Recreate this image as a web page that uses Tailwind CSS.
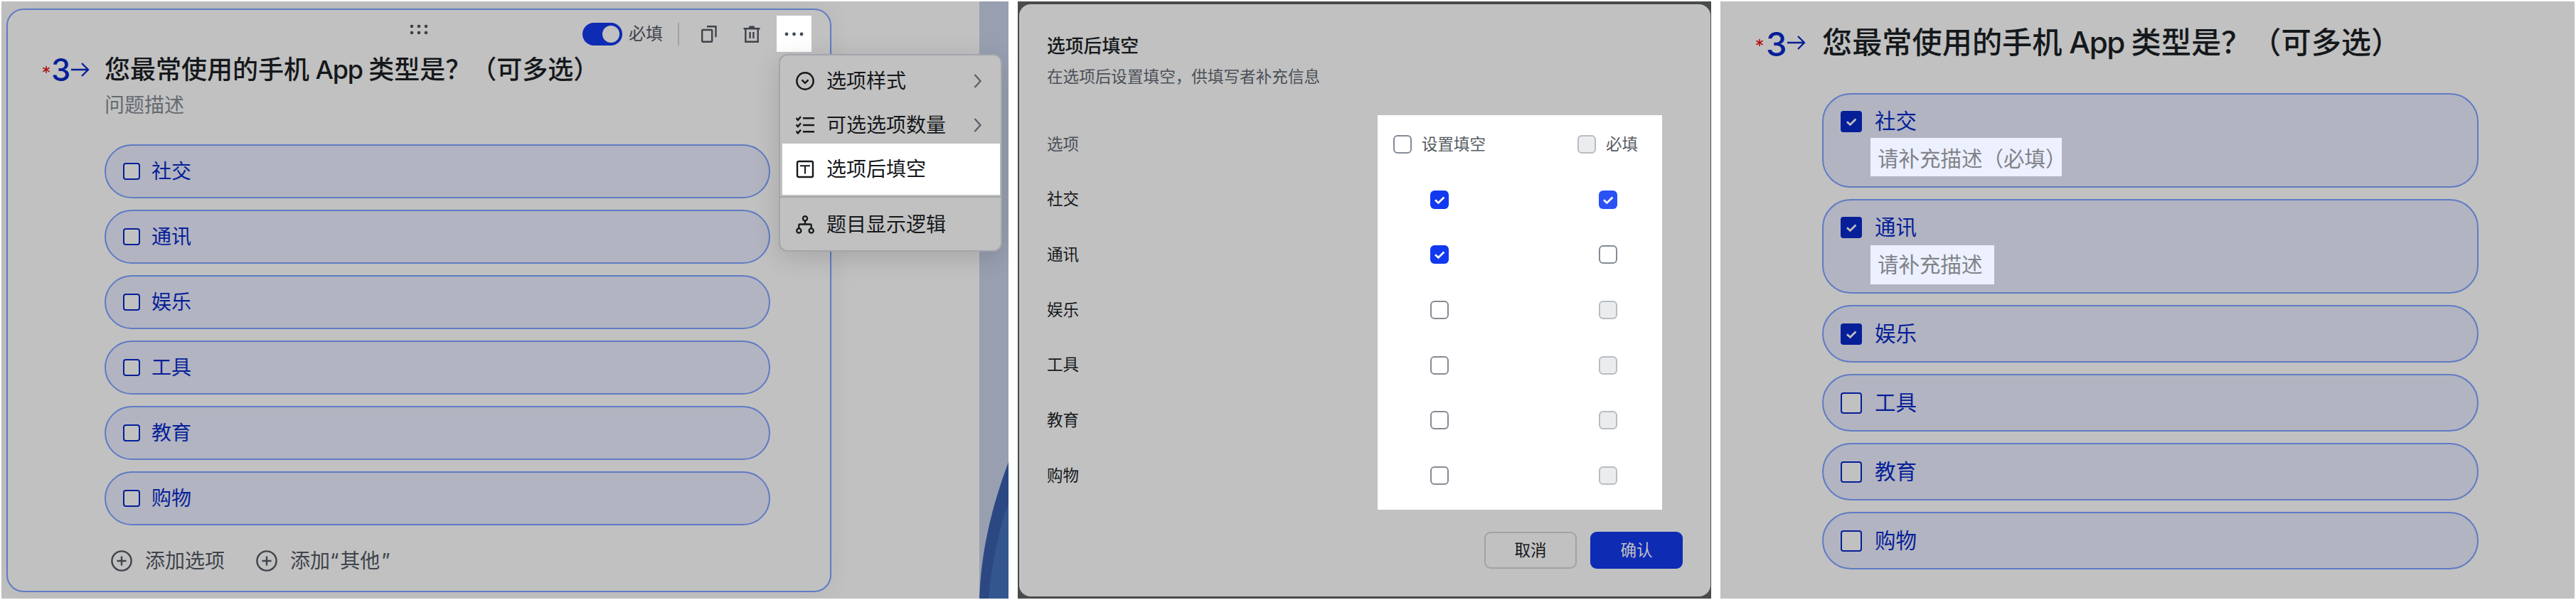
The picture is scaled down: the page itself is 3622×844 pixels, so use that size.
<!DOCTYPE html>
<html lang="zh-CN">
<head>
    <meta charset="UTF-8">
    <title>选项后填空</title>
    <script src="https://cdn.jsdelivr.net/npm/@tailwindcss/browser@4"></script>
</head>
<body class="w-[3622px] h-[844px] overflow-hidden bg-white flex items-start pl-[2px] pt-[2px] leading-none whitespace-nowrap font-['Inter','Noto_Sans_CJK_SC',sans-serif]">

    <svg class="hidden">
        <symbol id="check" viewBox="0 0 26 26"><path d="M7 13.2l4.4 4.2L19.4 9.4" fill="none" stroke="currentColor" stroke-width="2.8"/></symbol>
        <symbol id="arrow" viewBox="0 0 26 20"><path d="M0 10h24M15 1l9 9-9 9" fill="none" stroke="currentColor" stroke-width="2.3"/></symbol>
        <symbol id="star" viewBox="0 0 10 10"><path d="M5 0v10M.4 2.3l9.2 5.4M9.6 2.3l-9.2 5.4" fill="none" stroke="currentColor" stroke-width="1.6"/></symbol>
        <symbol id="plus" viewBox="0 0 30 30"><path d="M15 8.5v13M8.5 15h13" fill="none" stroke="currentColor" stroke-width="2.4"/><circle cx="15" cy="15" r="13.6" fill="none" stroke="currentColor" stroke-width="2.4"/></symbol>
        <symbol id="chevron" viewBox="0 0 12 20"><path d="M1.5 1l8 9-8 9" fill="none" stroke="currentColor" stroke-width="2.4"/></symbol>
    </svg>

    <!-- question editor -->
    <section class="relative shrink-0 w-[1416px] h-[840px] overflow-hidden bg-[#c1c1c1] flex">
        <div class="ml-[7px] mt-[10px] w-[1160px] h-[821px] rounded-[24px] border-2 border-[#5f7bc4] pt-2 shadow-[0_0_36px_rgba(0,0,0,0.06)]">
            <div class="grid grid-cols-[1fr_auto_1fr] h-[51px]">
                <div></div>
                <svg class="mt-3 w-[26px] h-[15px]" viewBox="0 0 26 15" fill="#3a3f45">
                    <circle cx="3" cy="3" r="2.3"/><circle cx="13" cy="3" r="2.3"/><circle cx="23" cy="3" r="2.3"/>
                    <circle cx="3" cy="12" r="2.3"/><circle cx="13" cy="12" r="2.3"/><circle cx="23" cy="12" r="2.3"/>
                </svg>
                <div class="flex items-center justify-end pr-[26px] text-[#3f444b]">
                    <div class="w-14 h-8 rounded-full bg-[#0e2bb4] p-1 flex justify-end"><span class="size-6 rounded-full bg-[#c1c1c1]"></span></div>
                    <span class="ml-[9px] w-12 text-[24px]">必填</span>
                    <span class="ml-[21px] w-[2px] h-8 bg-[#a0a2a4]"></span>
                    <svg class="ml-[30px] w-6 h-6" viewBox="0 0 24 24" fill="none" stroke="currentColor" stroke-width="2.4"><rect x="2.2" y="6" width="14" height="16.8" rx="1"/><path d="M9 1.3h12.5v15"/></svg>
                    <svg class="ml-9 w-6 h-6" viewBox="0 0 24 24" fill="none" stroke="currentColor" stroke-width="2.4"><path d="M.5 4.2h23M3.3 4.5v18.3h17.4V4.5M9.6 9v9M14.4 9v9"/><path d="M7.5 4.2l1-3.6h7l1 3.6z" fill="currentColor" stroke="none"/></svg>
                    <div class="ml-[23px] w-[49px] h-[51px] bg-white flex items-center justify-center">
                        <svg class="w-[27px] h-[6px]" viewBox="0 0 27 6" fill="#414b57"><circle cx="3" cy="3" r="2.4"/><circle cx="13.5" cy="3" r="2.4"/><circle cx="24" cy="3" r="2.4"/></svg>
                    </div>
                </div>
            </div>
            <div class="flex items-center h-[50px] pl-[49px] text-[#061f98]">
                <svg class="w-[10px] h-[10px] text-[#b01417]"><use href="#star"/></svg>
                <span class="ml-[2px] w-[28px] pt-[2px] text-[43.500px] font-medium">3</span>
                <svg class="w-[26px] h-[20px]"><use href="#arrow"/></svg>
                <h1 class="ml-[21px] text-[36px] font-medium text-[#15181b]">您最常使用的手机<span class="tracking-[-1.2px]"> App </span>类型是？（可多选）</h1>
            </div>
            <p class="ml-[136px] mt-[11px] h-7 text-[28px] text-[#656a70]">问题描述</p>
            <div class="ml-[136px] mt-[41px] w-[936px] flex flex-col gap-4 text-[28px] text-[#061f98]">
                <div class="flex items-center gap-4 h-[76px] pl-6 rounded-full border-2 border-[#5f7bc4] bg-[#b2b4c1]"><span class="size-6 rounded-[4px] border-2 border-[#061f98] bg-[#c1c1c1]"></span><span>社交</span></div>
                <div class="flex items-center gap-4 h-[76px] pl-6 rounded-full border-2 border-[#5f7bc4] bg-[#b2b4c1]"><span class="size-6 rounded-[4px] border-2 border-[#061f98] bg-[#c1c1c1]"></span><span>通讯</span></div>
                <div class="flex items-center gap-4 h-[76px] pl-6 rounded-full border-2 border-[#5f7bc4] bg-[#b2b4c1]"><span class="size-6 rounded-[4px] border-2 border-[#061f98] bg-[#c1c1c1]"></span><span>娱乐</span></div>
                <div class="flex items-center gap-4 h-[76px] pl-6 rounded-full border-2 border-[#5f7bc4] bg-[#b2b4c1]"><span class="size-6 rounded-[4px] border-2 border-[#061f98] bg-[#c1c1c1]"></span><span>工具</span></div>
                <div class="flex items-center gap-4 h-[76px] pl-6 rounded-full border-2 border-[#5f7bc4] bg-[#b2b4c1]"><span class="size-6 rounded-[4px] border-2 border-[#061f98] bg-[#c1c1c1]"></span><span>教育</span></div>
                <div class="flex items-center gap-4 h-[76px] pl-6 rounded-full border-2 border-[#5f7bc4] bg-[#b2b4c1]"><span class="size-6 rounded-[4px] border-2 border-[#061f98] bg-[#c1c1c1]"></span><span>购物</span></div>
            </div>
            <div class="ml-[145px] mt-[35px] h-[30px] flex items-center text-[28px] text-[#3f444b]">
                <svg class="size-[30px]"><use href="#plus"/></svg>
                <span class="ml-[18px] w-[112px]">添加选项</span>
                <svg class="ml-11 size-[30px]"><use href="#plus"/></svg>
                <span class="ml-[18px]">添加“<span class="mx-[2px]">其他</span>”</span>
            </div>
        </div>

        <svg class="ml-auto w-[41px] h-[840px] bg-[#989fb1]" viewBox="0 0 41 840">
            <path d="M41 648C20 704 3 765 0 840h41z" fill="#2b4882"/>
            <path d="M41 705C28 742 17 792 13 840h28z" fill="#34568f"/>
        </svg>

        <!-- more menu -->
        <div class="absolute left-[1093px] top-[74px] w-[314px] h-[278px] rounded-xl border-2 border-[#a3a5aa] bg-[#c1c1c1] shadow-[0_8px_36px_rgba(0,0,0,0.14)] pt-[5px] text-[28px] text-[#15181b]">
            <div class="flex items-center h-[62px] pl-[22px] pr-[26px]">
                <svg class="size-[26px]" viewBox="0 0 26 26" fill="none" stroke="currentColor" stroke-width="2.4"><circle cx="13" cy="13" r="11.7"/><path d="M8.5 11.3l4.5 4.5 4.5-4.5"/></svg>
                <span class="ml-[17px]">选项样式</span>
                <svg class="ml-auto w-3 h-5 text-[#5d6269]"><use href="#chevron"/></svg>
            </div>
            <div class="flex items-center h-[62px] pl-[22px] pr-[26px]">
                <svg class="size-[26px]" viewBox="0 0 26 26" fill="none" stroke="currentColor" stroke-width="2.4"><path d="M10 3.2h16M10 13h16M10 22.3h16M.5 3l2.4 2.8L7 1M.5 12.3l2.4 2.8L7 10.3M.5 21.6l2.4 2.8L7 19.6"/></svg>
                <span class="ml-[17px]">可选选项数量</span>
                <svg class="ml-auto w-3 h-5 text-[#5d6269]"><use href="#chevron"/></svg>
            </div>
            <div class="flex items-center ml-[3px] -mt-[5px] w-[306px] h-[72px] pl-[19px] bg-white">
                <svg class="size-[26px]" viewBox="0 0 26 26" fill="none" stroke="currentColor" stroke-width="2.4"><rect x="2" y="2" width="22" height="22" rx="2"/><path d="M6 8.3h14M13 8.3V19.5" stroke-width="2"/></svg>
                <span class="ml-[17px]">选项后填空</span>
            </div>
            <div class="mt-[2px] h-[2px] bg-[#a3a5a7]"></div>
            <div class="flex items-center h-[76px] pl-[22px]">
                <svg class="size-[26px]" viewBox="0 0 26 26" fill="none" stroke="currentColor" stroke-width="2.3"><circle cx="13" cy="4.2" r="3.1"/><circle cx="4.3" cy="21.5" r="3.1"/><circle cx="21.7" cy="21.5" r="3.1"/><path d="M13 7.5v5M4.3 18v-4.2q0-1.3 1.3-1.3h14.8q1.3 0 1.3 1.3V18"/></svg>
                <span class="ml-[17px]">题目显示逻辑</span>
            </div>
        </div>
    </section>

    <!-- fill-in dialog -->
    <section class="shrink-0 ml-[13px] w-[975px] h-[840px] bg-[#484a4b] pl-[2px] pt-1">
        <div class="w-[972px] h-[833px] rounded-2xl bg-[#c1c1c1] pl-[39px] text-[22.500px]">
            <h2 class="pt-[46px] h-[73px] text-[25.800px] font-medium text-[#15181b]">选项后填空</h2>
            <p class="pt-[18px] h-[83px] text-[22.600px] text-[#4b5057]">在选项后设置填空，供填写者补充信息</p>
            <div class="flex h-[555px]">
                <div class="w-[465px] pt-[2px] text-[#15181b]">
                    <div class="flex items-center h-[77.700px] text-[#4b5057]">选项</div>
                    <div class="flex items-center h-[77.700px]">社交</div>
                    <div class="flex items-center h-[77.700px]">通讯</div>
                    <div class="flex items-center h-[77.700px]">娱乐</div>
                    <div class="flex items-center h-[77.700px]">工具</div>
                    <div class="flex items-center h-[77.700px]">教育</div>
                    <div class="flex items-center h-[77.700px]">购物</div>
                </div>
                <div class="w-[400px] pt-[2px] bg-white text-[#565b62]">
                    <div class="flex items-center h-[77.700px] pl-[22px]">
                        <span class="size-[26px] rounded-[6px] border-2 border-[#858b95]"></span><span class="ml-[14px] w-[90px]">设置填空</span>
                        <span class="ml-[129px] size-[26px] rounded-[6px] border-2 border-[#b8bdc2] bg-[#ebecee]"></span><span class="ml-[14px]">必填</span>
                    </div>
                    <div class="flex items-center gap-[211px] h-[77.700px] pl-[74px]">
                        <span class="size-[26px] rounded-[6px] bg-[#1139ef] text-white"><svg class="size-[26px]"><use href="#check"/></svg></span>
                        <span class="size-[26px] rounded-[6px] bg-[#2a52f5] text-white"><svg class="size-[26px]"><use href="#check"/></svg></span>
                    </div>
                    <div class="flex items-center gap-[211px] h-[77.700px] pl-[74px]">
                        <span class="size-[26px] rounded-[6px] bg-[#1139ef] text-white"><svg class="size-[26px]"><use href="#check"/></svg></span>
                        <span class="size-[26px] rounded-[6px] border-2 border-[#858b95]"></span>
                    </div>
                    <div class="flex items-center gap-[211px] h-[77.700px] pl-[74px]">
                        <span class="size-[26px] rounded-[6px] border-2 border-[#858b95]"></span>
                        <span class="size-[26px] rounded-[6px] border-2 border-[#b8bdc2] bg-[#ebecee]"></span>
                    </div>
                    <div class="flex items-center gap-[211px] h-[77.700px] pl-[74px]">
                        <span class="size-[26px] rounded-[6px] border-2 border-[#858b95]"></span>
                        <span class="size-[26px] rounded-[6px] border-2 border-[#b8bdc2] bg-[#ebecee]"></span>
                    </div>
                    <div class="flex items-center gap-[211px] h-[77.700px] pl-[74px]">
                        <span class="size-[26px] rounded-[6px] border-2 border-[#858b95]"></span>
                        <span class="size-[26px] rounded-[6px] border-2 border-[#b8bdc2] bg-[#ebecee]"></span>
                    </div>
                    <div class="flex items-center gap-[211px] h-[77.700px] pl-[74px]">
                        <span class="size-[26px] rounded-[6px] border-2 border-[#858b95]"></span>
                        <span class="size-[26px] rounded-[6px] border-2 border-[#b8bdc2] bg-[#ebecee]"></span>
                    </div>
                </div>
            </div>
            <div class="flex justify-end gap-[19px] mt-[31px] pr-[39px]">
                <button class="w-[130px] h-[52px] rounded-[9px] border-2 border-[#a0a2a6] text-[#15181b]">取消</button>
                <button class="w-[130px] h-[52px] rounded-[9px] bg-[#0e2bb4] text-[#c1c1c1]">确认</button>
            </div>
        </div>
    </section>

    <!-- respondent view -->
    <section class="shrink-0 ml-[13px] w-[1201px] h-[840px] bg-[#c1c1c1] pt-[33px]">
        <div class="flex items-center h-[50px] pl-[50px] text-[#061f98]">
            <svg class="w-[10px] h-[10px] text-[#b01417]"><use href="#star"/></svg>
            <span class="ml-[4px] w-[30px] pt-[2px] text-[47px] font-medium">3</span>
            <svg class="w-[26px] h-[20px]"><use href="#arrow"/></svg>
            <h1 class="ml-[23px] text-[42.200px] font-medium text-[#15181b]">您最常使用的手机<span class="tracking-[-1.5px]"> App </span>类型是？（可多选）</h1>
        </div>
        <div class="ml-[143px] mt-[46px] w-[923px] flex flex-col gap-4 text-[29.500px] text-[#061f98]">
            <div class="h-[133px] pl-6 pt-[23px] rounded-[40px] border-2 border-[#5f7bc4] bg-[#b2b4c1]">
                <div class="flex items-center gap-[18px] h-[30px]"><span class="size-[30px] rounded-[4px] bg-[#061f98] text-[#c1c1c1]"><svg class="size-[30px] p-[2px]"><use href="#check"/></svg></span><span>社交</span></div>
                <div class="flex items-center ml-[42px] mt-[8px] w-[269px] h-[54px] pl-[10px] pt-[5px] bg-[#edf0ff] text-[#808388]">请补充描述（必填）</div>
            </div>
            <div class="h-[133px] pl-6 pt-[23px] rounded-[40px] border-2 border-[#5f7bc4] bg-[#b2b4c1]">
                <div class="flex items-center gap-[18px] h-[30px]"><span class="size-[30px] rounded-[4px] bg-[#061f98] text-[#c1c1c1]"><svg class="size-[30px] p-[2px]"><use href="#check"/></svg></span><span>通讯</span></div>
                <div class="flex items-center ml-[42px] mt-[10px] w-[174px] h-[55px] pl-[10px] bg-[#edf0ff] text-[#808388]">请补充描述</div>
            </div>
            <div class="flex items-center gap-[18px] h-[81px] pl-6 rounded-full border-2 border-[#5f7bc4] bg-[#b2b4c1]"><span class="size-[30px] rounded-[4px] bg-[#061f98] text-[#c1c1c1]"><svg class="size-[30px] p-[2px]"><use href="#check"/></svg></span><span>娱乐</span></div>
            <div class="flex items-center gap-[18px] h-[81px] pl-6 rounded-full border-2 border-[#5f7bc4] bg-[#b2b4c1]"><span class="size-[30px] rounded-[4px] border-2 border-[#061f98] bg-[#c1c1c1]"></span><span>工具</span></div>
            <div class="flex items-center gap-[18px] h-[81px] pl-6 rounded-full border-2 border-[#5f7bc4] bg-[#b2b4c1]"><span class="size-[30px] rounded-[4px] border-2 border-[#061f98] bg-[#c1c1c1]"></span><span>教育</span></div>
            <div class="flex items-center gap-[18px] h-[81px] pl-6 rounded-full border-2 border-[#5f7bc4] bg-[#b2b4c1]"><span class="size-[30px] rounded-[4px] border-2 border-[#061f98] bg-[#c1c1c1]"></span><span>购物</span></div>
        </div>
    </section>
</body>
</html>
